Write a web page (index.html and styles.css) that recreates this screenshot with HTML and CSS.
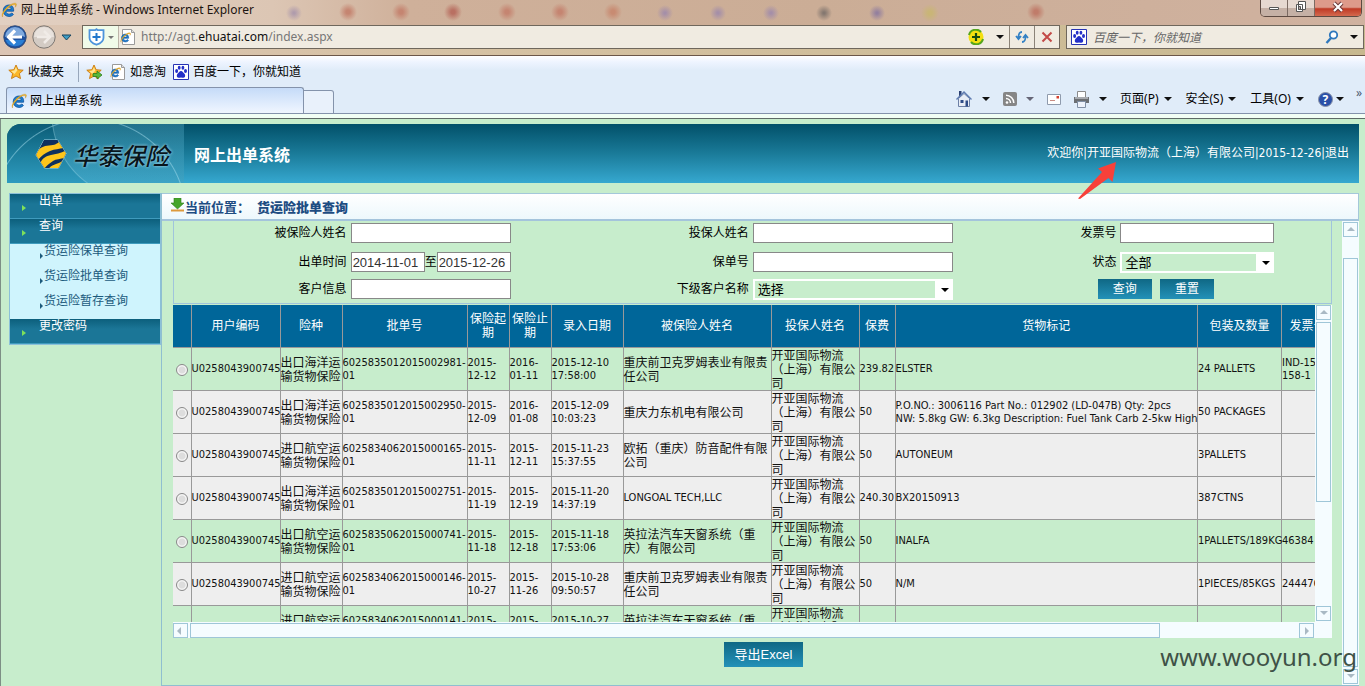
FILE: index.html
```html
<!DOCTYPE html>
<html lang="zh-CN">

<head>
    <meta charset="UTF-8">
    <title>网上出单系统</title>
    <link rel="stylesheet" href="styles.css">
</head>

<body>
    <svg class="defs" width="0" height="0">
        <symbol id="ie" viewBox="0 0 16 16">
            <path d="M12.6 9.2H4.9c.1 2 1.5 3 3.3 3 1.200 0 2.100-.4 2.700-1.200l1.500 1.400c-1 1.400-2.500 2-4.400 2-3.400 0-5.800-2.300-5.800-5.700 0-3.400 2.400-5.700 5.600-5.700 3.300 0 5.200 2.400 4.800 6.200zM5 7.300h5.200c-.2-1.500-1.100-2.300-2.500-2.300S5.200 5.800 5 7.300z" fill="#1c7fd0" stroke="#0c4f9c" stroke-width=".8" />
            <path d="M1.600 15C-.4 13 3.200 6.500 8.500 3.200 11.600 1.200 14.500.6 15.200 1.700c.5.800 0 2.200-.8 3.500.3-1.500.2-2.400-.6-2.600-1.600-.3-4.500 1.200-7.300 3.800C3.200 9.600 1 13.200 1.600 15z" fill="#f0b428" stroke="#b97d10" stroke-width=".3" />
        </symbol>
        <symbol id="page-icon" viewBox="0 0 16 16">
            <path d="M2.500.5h9l3 3v12h-12z" fill="#fff" stroke="#9a9a9a" />
            <path d="M11.500.5v3h3" fill="#ddd" stroke="#9a9a9a" />
            <svg x="0" y="3" width="11" height="11" viewBox="0 0 16 16"><use href="#ie" /></svg>
        </symbol>
        <symbol id="paw" viewBox="0 0 16 16">
            <path d="M.5.500h15v15H.500z" fill="#fff" stroke="#2632b4" />
            <ellipse cx="3.600" cy="7" rx="1.500" ry="2" />
            <ellipse cx="6.200" cy="3.800" rx="1.400" ry="2" />
            <ellipse cx="9.900" cy="3.800" rx="1.400" ry="2" />
            <ellipse cx="12.500" cy="7" rx="1.500" ry="2" />
            <path d="M8 7c1.600 0 2.100 1.500 3.200 2.600 1.500 1.500 1.300 4-.7 4.200-1 .1-1.600-.3-2.500-.3s-1.500.4-2.500.3c-2-.2-2.200-2.700-.7-4.200C5.900 8.500 6.400 7 8 7z" />
        </symbol>
        <symbol id="star" viewBox="0 0 16 16">
            <path d="M8 1l2.100 4.700 5.100.5-3.800 3.400 1.100 5L8 12l-4.500 2.600 1.100-5L.8 6.200l5.100-.5z" fill="#fbb829" stroke="#c8780c" stroke-width=".9" />
            <path d="M8 3l1.300 3.400-2.800 3.600-3.400-3 3.200-.4z" fill="#ffe591" />
        </symbol>
    </svg>

    <header id="browser">
        <div class="title-bar">
            <svg class="icon"><use href="#ie" /></svg>
            <span class="title">网上出单系统 - Windows Internet Explorer</span>
            <div class="win-btns">
                <button class="min" aria-label="最小化"><svg width="12" height="14" viewBox="0 0 12 14"><path d="M1.500 7.500h9v2h-9z" fill="#fff" stroke="#555" /></svg></button>
                <button class="max" aria-label="还原"><svg width="12" height="14" viewBox="0 0 12 14"><path d="M3.500 1.500h7v8h-7zM1.500 4.500h6v7h-6z" fill="#fff" stroke="#555" /><path d="M3.500 6.500h2v3h-2z" fill="#baa" stroke="#555" /></svg></button>
                <button class="close" aria-label="关闭"><svg width="12" height="14" viewBox="0 0 12 14"><path d="M2 3l8 8M10 3l-8 8" stroke="#633" stroke-width="4" /><path d="M2 3l8 8M10 3l-8 8" stroke="#fff" stroke-width="2.200" /></svg></button>
            </div>
        </div>
        <div class="address-bar">
            <button class="nav back" aria-label="后退"><svg width="24" height="24" viewBox="0 0 24 24"><circle cx="12" cy="12" r="11.200" fill="#1d4f9e" stroke="#36517c" /><path d="M2 12a10 10 0 0120 0c-5-2-15-2-20 0z" fill="#7fa9dd" /><path d="M2.500 15a10 9 0 0019 0z" fill="#2a7fd4" /><path d="M12 5.500L5.500 12l6.500 6.500M6.500 12H19" fill="none" stroke="#fff" stroke-width="3.200" /></svg></button>
            <button class="nav forward" aria-label="前进"><svg width="24" height="24" viewBox="0 0 24 24"><circle cx="12" cy="12" r="11.200" fill="#d3cbc4" stroke="#7d7772" /><path d="M2 12a10 10 0 0120 0z" fill="#e8e2dd" /><path d="M12 6l6 6-6 6M17.500 12H5" fill="none" stroke="#f0ebe7" stroke-width="2.500" /></svg></button>
            <button class="history" aria-label="历史"><svg width="11" height="7" viewBox="0 0 11 7"><path d="M1 1h9L5.500 6z" fill="#3e9cc4" stroke="#17455f" /></svg></button>
            <div class="url-box">
                <span class="shield">
                    <svg width="17" height="18" viewBox="0 0 17 18"><path d="M8.500 1.200l1.300 1h5.700v7.500c0 4-4 6-7 7-3-1-7-3-7-7V2.200h5.700z" fill="#fff" stroke="#4d94dc" stroke-width="1.800" /><path d="M8.500 5v8M4.500 9h8" stroke="#2277cc" stroke-width="2" /></svg>
                    <i class="caret small"></i>
                </span>
                <svg class="icon"><use href="#page-icon" /></svg>
                <span class="url">http://agt.<b>ehuatai.com</b>/index.aspx</span>
                <svg class="plus" width="16" height="16" viewBox="0 0 16 16"><circle cx="8" cy="8" r="7.500" fill="#f4e010" /><path d="M1 6a7 7 0 0112-3M15 10a7 7 0 01-12 3" fill="none" stroke="#56a51c" stroke-width="2" /><path d="M8 4v8M4 8h8" stroke="#174c12" stroke-width="2.200" /></svg>
                <i class="caret"></i>
                <button class="cell" aria-label="刷新"><svg width="14" height="14" viewBox="0 0 14 14"><path d="M7 2C4 2 3.500 4 3.500 8M1 6l2.500 3L6 6M7 12c3 0 3.500-2 3.500-6M8 8l2.500-3L13 8" fill="none" stroke="#3280c4" stroke-width="1.800" /></svg></button>
                <button class="cell" aria-label="停止"><svg width="12" height="12" viewBox="0 0 12 12"><path d="M1.500 1.500l9 9M10.500 1.500l-9 9" stroke="#c34a48" stroke-width="2" /></svg></button>
            </div>
            <div class="search-box">
                <svg class="icon paw"><use href="#paw" /></svg>
                <input type="text" aria-label="搜索" placeholder="百度一下，你就知道">
                <svg width="14" height="14" viewBox="0 0 14 14"><circle cx="8.500" cy="5" r="3.700" fill="#fff" stroke="#2f78bd" stroke-width="1.800" /><path d="M6 8l-4.500 5" stroke="#2f78bd" stroke-width="2.400" /></svg>
                <i class="caret"></i>
            </div>
        </div>
        <nav class="favorites">
            <a href="#"><svg class="icon"><use href="#star" /></svg>收藏夹</a>
            <a href="#" class="add" aria-label="添加到收藏夹栏"><svg width="17" height="16" viewBox="0 0 17 16"><use href="#star" width="16" height="16" /><path d="M7 9.500h4V7l5 4-5 4v-2.500H7z" fill="#58b83a" stroke="#2c7c1b" stroke-width=".8" /></svg></a>
            <a href="#"><svg class="icon"><use href="#page-icon" /></svg>如意淘</a>
            <a href="#"><svg class="icon paw"><use href="#paw" /></svg>百度一下，你就知道</a>
        </nav>
        <div class="tab-bar">
            <a href="#" class="tab"><svg class="icon"><use href="#ie" /></svg>网上出单系统</a>
            <button class="new-tab" aria-label="新选项卡"></button>
            <div class="tools">
                <button aria-label="主页"><svg width="18" height="18" viewBox="0 0 18 18"><path d="M4 1h2.500v5L4 8z" fill="#2b3f72" /><path d="M3.500 8.500L9 3.500l5.500 5v8h-11z" fill="#e8edf6" stroke="#6d80a6" /><path d="M1.500 9.500L9 2l7.500 7.500" fill="none" stroke="#5f7bb0" stroke-width="1.400" /><path d="M5.500 10h3v3h-3zM10.500 10.500H13v6h-2.500z" fill="#2f4d88" /></svg></button>
                <i class="caret"></i>
                <button class="rss" aria-label="源"><svg width="14" height="14" viewBox="0 0 14 14"><rect width="14" height="14" rx="2" fill="#868686" /><circle cx="4" cy="10.500" r="1.300" fill="#fff" /><path d="M3 6.500a4.500 4.500 0 014.500 4.500M3 3.200A7.800 7.800 0 0110.800 11" fill="none" stroke="#fff" stroke-width="1.500" /></svg></button>
                <i class="caret dim"></i>
                <button class="mail" aria-label="阅读邮件"><svg width="14" height="11" viewBox="0 0 14 11"><path d="M.500.500h13v10H.500z" fill="#fff" stroke="#8f9bad" /><path d="M9.500 2h2.500v2.500H9.500z" fill="#d5402f" /><path d="M3 6.500h5" stroke="#c98d84" /></svg></button>
                <button aria-label="打印"><svg width="17" height="17" viewBox="0 0 17 17"><path d="M4.500.500h8v6h-8z" fill="#fff" stroke="#8b8b8b" /><path d="M1 6h15v6H1z" fill="#6c6f73" /><path d="M2 6h13v2H2z" fill="#a8abb0" /><path d="M4.500 10.500h8v6h-8z" fill="#eef3fb" stroke="#8190a5" /></svg></button>
                <i class="caret"></i>
                <button class="menu">页面(P)<i class="caret"></i></button>
                <button class="menu">安全(S)<i class="caret"></i></button>
                <button class="menu">工具(O)<i class="caret"></i></button>
                <button class="help" aria-label="帮助"><span>?</span><i class="caret"></i></button>
                <span class="more">»</span>
            </div>
        </div>
    </header>

    <div id="page">
        <header class="banner">
            <div class="logo">
                <svg width="32" height="31" viewBox="0 0 32 31">
                    <defs><clipPath id="hex"><path d="M9 1h13.500L31 14.500 23.500 29H9.500L1 16z" /></clipPath></defs>
                    <path d="M9 1h13.500L31 14.500 23.500 29H9.500L1 16z" fill="none" stroke="#a9d6e8" />
                    <g clip-path="url(#hex)">
                        <path d="M0 0h32v31H0z" fill="#0d2f5e" />
                        <path d="M0 17C3 9 8 7 14 6.500S22 5 25 2l4 7c-5 1-9 1-14 3S6 17 3 21z" fill="#fdc51b" />
                        <path d="M5 25c2-6 6-8 11-9s10-2 16-5l-2 8c-5 1-9 1-12 3s-6 4-9 8z" fill="#fdc51b" />
                        <path d="M13 31c2-4 5-5 8-6s5-2 8-4l-3 10z" fill="#fdc51b" />
                    </g>
                </svg>
                <span>华泰保险</span>
            </div>
            <h1>网上出单系统</h1>
            <p class="user">欢迎你|开亚国际物流（上海）有限公司|2015-12-26|<a href="#">退出</a></p>
        </header>

        <div id="wrap">
            <aside>
                <ul id="menu">
                    <li><a href="#">出单</a></li>
                    <li>
                        <a href="#">查询</a>
                        <ul class="sub">
                            <li><a href="#">货运险保单查询</a></li>
                            <li><a href="#">货运险批单查询</a></li>
                            <li><a href="#">货运险暂存查询</a></li>
                        </ul>
                    </li>
                    <li><a href="#">更改密码</a></li>
                </ul>
            </aside>

            <main>
                <div class="crumb">
                    <svg width="15" height="14" viewBox="0 0 15 14"><path d="M4 0h7v5h3l-6.500 6L1 5h3z" fill="#45a52a" stroke="#2f7c1b" stroke-width=".6" /><path d="M1 11.500h13v2H1z" fill="#dd9a3c" /></svg>
                    <span>当前位置：</span>
                    <b>货运险批单查询</b>
                </div>
                <div class="frame">
                    <section class="content">
                        <form id="query">
                            <label for="insured">被保险人姓名</label>
                            <div><input type="text" id="insured" class="w160"></div>
                            <label for="holder">投保人姓名</label>
                            <div><input type="text" id="holder" class="w200"></div>
                            <label for="invoice">发票号</label>
                            <div><input type="text" id="invoice" class="w154"></div>

                            <label for="from">出单时间</label>
                            <div><input type="text" id="from" class="date" value="2014-11-01">至<input type="text" class="date" aria-label="截止时间" value="2015-12-26"></div>
                            <label for="policy">保单号</label>
                            <div><input type="text" id="policy" class="w200"></div>
                            <label for="state">状态</label>
                            <div><span class="select w154"><select id="state"><option>全部</option></select></span></div>

                            <label for="customer">客户信息</label>
                            <div><input type="text" id="customer" class="w160"></div>
                            <label for="sub">下级客户名称</label>
                            <div><span class="select w200"><select id="sub"><option>选择</option></select></span></div>
                            <div class="btns">
                                <button type="button" class="btn">查询</button>
                                <button type="reset" class="btn">重置</button>
                            </div>
                        </form>

                        <div class="grid">
                            <div class="view">
                                <table>
                                    <colgroup>
                                        <col class="c-radio"><col class="c-user"><col class="c-kind"><col class="c-no"><col class="c-day"><col class="c-day"><col class="c-time"><col class="c-insured"><col class="c-holder"><col class="c-fee"><col><col class="c-pack"><col class="c-invoice"><col class="c-state">
                                    </colgroup>
                                    <thead>
                                        <tr>
                                            <th></th><th>用户编码</th><th>险种</th><th>批单号</th><th>保险起期</th><th>保险止期</th><th>录入日期</th><th>被保险人姓名</th><th>投保人姓名</th><th>保费</th><th>货物标记</th><th>包装及数量</th><th>发票号</th><th></th>
                                        </tr>
                                    </thead>
                                    <tbody>
                                        <tr class="on">
                                            <td><input type="radio" name="row" aria-label="第1行"></td>
                                            <td>U0258043900745</td>
                                            <td class="cn">出口海洋运输货物保险</td>
                                            <td>6025835012015002981-01</td>
                                            <td>2015-12-12</td>
                                            <td>2016-01-11</td>
                                            <td>2015-12-10 17:58:00</td>
                                            <td class="cn">重庆前卫克罗姆表业有限责任公司</td>
                                            <td class="cn">开亚国际物流（上海）有限公司</td>
                                            <td>239.82</td>
                                            <td>ELSTER</td>
                                            <td>24 PALLETS</td>
                                            <td>IND-15-158-1</td>
                                            <td></td>
                                        </tr>
                                        <tr>
                                            <td><input type="radio" name="row" aria-label="第2行"></td>
                                            <td>U0258043900745</td>
                                            <td class="cn">出口海洋运输货物保险</td>
                                            <td>6025835012015002950-01</td>
                                            <td>2015-12-09</td>
                                            <td>2016-01-08</td>
                                            <td>2015-12-09 10:03:23</td>
                                            <td class="cn">重庆力东机电有限公司</td>
                                            <td class="cn">开亚国际物流（上海）有限公司</td>
                                            <td>50</td>
                                            <td class="goods">P.O.NO.: 3006116 Part No.: 012902 (LD-047B) Qty: 2pcs<br>NW: 5.8kg GW: 6.3kg Description: Fuel Tank Carb 2-5kw High</td>
                                            <td>50 PACKAGES</td>
                                            <td></td>
                                            <td></td>
                                        </tr>
                                        <tr>
                                            <td><input type="radio" name="row" aria-label="第3行"></td>
                                            <td>U0258043900745</td>
                                            <td class="cn">进口航空运输货物保险</td>
                                            <td>6025834062015000165-01</td>
                                            <td>2015-11-11</td>
                                            <td>2015-12-11</td>
                                            <td>2015-11-23 15:37:55</td>
                                            <td class="cn">欧拓（重庆）防音配件有限公司</td>
                                            <td class="cn">开亚国际物流（上海）有限公司</td>
                                            <td>50</td>
                                            <td>AUTONEUM</td>
                                            <td>3PALLETS</td>
                                            <td></td>
                                            <td></td>
                                        </tr>
                                        <tr>
                                            <td><input type="radio" name="row" aria-label="第4行"></td>
                                            <td>U0258043900745</td>
                                            <td class="cn">出口海洋运输货物保险</td>
                                            <td>6025835012015002751-01</td>
                                            <td>2015-11-19</td>
                                            <td>2015-12-19</td>
                                            <td>2015-11-20 14:37:19</td>
                                            <td>LONGOAL TECH,LLC</td>
                                            <td class="cn">开亚国际物流（上海）有限公司</td>
                                            <td>240.30</td>
                                            <td>BX20150913</td>
                                            <td>387CTNS</td>
                                            <td></td>
                                            <td></td>
                                        </tr>
                                        <tr class="on">
                                            <td><input type="radio" name="row" aria-label="第5行"></td>
                                            <td>U0258043900745</td>
                                            <td class="cn">出口航空运输货物保险</td>
                                            <td>6025835062015000741-01</td>
                                            <td>2015-11-18</td>
                                            <td>2015-12-18</td>
                                            <td>2015-11-18 17:53:06</td>
                                            <td class="cn">英拉法汽车天窗系统（重庆）有限公司</td>
                                            <td class="cn">开亚国际物流（上海）有限公司</td>
                                            <td>50</td>
                                            <td>INALFA</td>
                                            <td>1PALLETS/189KG</td>
                                            <td>46384</td>
                                            <td></td>
                                        </tr>
                                        <tr>
                                            <td><input type="radio" name="row" aria-label="第6行"></td>
                                            <td>U0258043900745</td>
                                            <td class="cn">进口航空运输货物保险</td>
                                            <td>6025834062015000146-01</td>
                                            <td>2015-10-27</td>
                                            <td>2015-11-26</td>
                                            <td>2015-10-28 09:50:57</td>
                                            <td class="cn">重庆前卫克罗姆表业有限责任公司</td>
                                            <td class="cn">开亚国际物流（上海）有限公司</td>
                                            <td>50</td>
                                            <td>N/M</td>
                                            <td>1PIECES/85KGS</td>
                                            <td>244476</td>
                                            <td></td>
                                        </tr>
                                        <tr class="on">
                                            <td></td>
                                            <td></td>
                                            <td class="cn">进口航空运输货物保险</td>
                                            <td>6025834062015000141-01</td>
                                            <td>2015-10-27</td>
                                            <td>2015-11-26</td>
                                            <td>2015-10-27 09:50:57</td>
                                            <td class="cn">英拉法汽车天窗系统（重庆）有限公司</td>
                                            <td class="cn">开亚国际物流（上海）有限公司</td>
                                            <td></td>
                                            <td></td>
                                            <td></td>
                                            <td></td>
                                            <td></td>
                                        </tr>
                                    </tbody>
                                </table>
                            </div>
                            <div class="scroll-y"><i class="up"></i><i class="thumb"></i><i class="down"></i></div>
                            <div class="scroll-x"><i class="left"></i><i class="thumb"></i><i class="right"></i></div>
                            <div class="corner"></div>
                        </div>

                        <div class="export"><button type="button" class="btn">导出Excel</button></div>
                    </section>
                    <div class="scroll-y outer"><i class="up"></i><i class="thumb"></i><i class="down"></i></div>
                </div>
            </main>
        </div>
    </div>

    <svg class="pointer" width="42" height="40" viewBox="0 0 42 40"><path d="M40 2L22 8.500l4 3.500L2 38.500l2 .5L32.500 18l4 4z" fill="#f8413a" /></svg>
    <div class="watermark">www.wooyun.org</div>
</body>

</html>
```

FILE: styles.css
```css
* {
    box-sizing: border-box;
}

body {
    display: flex;
    flex-direction: column;
    position: relative;
    height: 100vh;
    margin: 0;
    overflow: hidden;
    background: #c7edcc;
    font-size: 12px;
    line-height: 14px;
    font-family: "Liberation Sans", "Noto Sans CJK SC", sans-serif;
}

ul {
    padding: 0;
    margin: 0;
    list-style: none;
}

a {
    color: inherit;
    text-decoration: none;
}

button {
    padding: 0;
    border: 0;
    background: none;
    color: inherit;
    font: inherit;
}

svg {
    display: block;
    flex: none;
}

.defs {
    position: absolute;
}

.icon {
    width: 16px;
    height: 16px;
}

.paw {
    fill: #2430c8;
}

.caret {
    flex: none;
    width: 0;
    border: 4px solid transparent;
    border-top-color: #111;
    border-bottom: 0;
}

.caret.small {
    border-width: 3px;
    border-bottom: 0;
    border-top-color: #777;
}

.caret.dim {
    border-top-color: #667;
}

/* 浏览器外框 */
#browser {
    flex: none;
    font-family: "Noto Sans", "Noto Sans CJK SC", sans-serif;
}

.title-bar {
    display: flex;
    align-items: center;
    height: 25px;
    padding-left: 1px;
    padding-bottom: 5px;
    background:
        radial-gradient(circle at 453px 12px, #b97062 2px, transparent 9px),
        radial-gradient(circle at 507px 12px, #c58571 2px, transparent 9px),
        radial-gradient(circle at 560px 12px, #c58571 2px, transparent 9px),
        radial-gradient(circle at 613px 12px, #c88b72 2px, transparent 9px),
        radial-gradient(circle at 348px 12px, #c58571 2px, transparent 9px),
        radial-gradient(circle at 401px 12px, #c58571 2px, transparent 9px),
        radial-gradient(circle at 294px 13px, #b09cac 1px, transparent 8px),
        radial-gradient(circle at 665px 13px, #a58fa8 1px, transparent 8px),
        radial-gradient(circle at 718px 13px, #a58fa8 1px, transparent 8px),
        radial-gradient(circle at 771px 13px, #a58fa8 1px, transparent 8px),
        radial-gradient(circle at 824px 13px, #857870 1px, transparent 8px),
        radial-gradient(circle at 877px 13px, #94809e 1px, transparent 8px),
        radial-gradient(circle at 930px 13px, #c9b577 2px, transparent 9px),
        radial-gradient(circle at 1036px 12px, #c07c6a 2px, transparent 9px),
        linear-gradient(90deg, #e2d0c2, #dcc6b4 20%, #cfb09a 30%, #cbad96 60%, #d0b2a0);
}

.title {
    flex: 1;
    margin-left: 4px;
    color: #1c1410;
}

.win-btns {
    display: flex;
    align-self: flex-start;
    height: 17px;
    margin-right: 3px;
    border: 1px solid #5d4a42;
    border-top: 0;
    border-radius: 0 0 5px 5px;
    overflow: hidden;
}

.win-btns button {
    display: flex;
    justify-content: center;
    width: 27px;
    border-right: 1px solid #7b6a62;
    background: linear-gradient(#e6d8d0 50%, #c5b0a5 50%);
}

.win-btns .close {
    width: 46px;
    border: 0;
    background: linear-gradient(#dd9a8a 45%, #bf3a25 55%, #d4694f);
}

.address-bar {
    display: flex;
    align-items: center;
    height: 31px;
    padding: 0 1px 6px 3px;
    border-bottom: 1px solid #6b5648;
    background: linear-gradient(90deg, #dcc5b4, #d6c2a4 30%, #c8b98f);
}

.nav {
    margin-right: 5px;
}

.history {
    margin-right: 10px;
}

.url-box,
.search-box {
    display: flex;
    align-items: center;
    height: 24px;
    border: 1px solid #6f675c;
    background: #f0ebe1;
}

.url-box {
    flex: 1;
}

.shield {
    display: flex;
    align-items: center;
    gap: 3px;
    height: 22px;
    margin-right: 1px;
    padding: 0 4px 0 5px;
    background: #f0fbe9;
    border-right: 1px solid #bcb5a9;
}

.url {
    flex: 1;
    margin-left: 5px;
    color: #777;
}

.url b {
    color: #111;
    font-weight: normal;
}

.plus {
    margin-right: 12px;
}

.url-box .cell {
    display: flex;
    align-items: center;
    justify-content: center;
    width: 25px;
    height: 22px;
    border-left: 1px solid #8b8378;
}

.url-box .caret {
    margin-right: 5px;
}

.url-box .caret.small {
    margin: 0;
}

.search-box {
    width: 298px;
    margin-left: 6px;
    padding: 0 5px 0 4px;
    gap: 6px;
}

.search-box input {
    flex: 1;
    min-width: 0;
    height: 16px;
    padding: 0;
    border: 0;
    background: none;
    font: italic 12px/16px "Noto Sans CJK SC", sans-serif;
}

.search-box input::placeholder {
    color: #666;
}

.search-box .caret {
    margin-left: 5px;
}

.favorites {
    display: flex;
    align-items: center;
    height: 31px;
    padding-left: 8px;
    background: linear-gradient(#fff, #eef4ff 6px, #e0ecf9 14px);
}

.favorites a {
    display: flex;
    align-items: center;
    gap: 4px;
    margin-right: 7px;
}

.favorites a:first-child {
    margin-right: 14px;
}

.favorites .add {
    height: 20px;
    padding-left: 7px;
    border-left: 1px solid #98a7bb;
}

.tab-bar {
    display: flex;
    align-items: flex-end;
    height: 32px;
    padding-left: 6px;
    border-bottom: 1px solid #5e6a66;
    background: linear-gradient(#e0ecf9 26px, #8493ab 26px, #8493ab 27px, #f2fff5 27px);
}

.tab {
    display: flex;
    align-items: center;
    gap: 3px;
    width: 298px;
    height: 26px;
    margin-bottom: 5px;
    padding-left: 4px;
    border: 1px solid #8493ab;
    border-bottom: 0;
    border-radius: 3px 3px 0 0;
    background: linear-gradient(#c5dbf8, #f0f6ff);
}

.new-tab {
    width: 30px;
    height: 24px;
    margin-bottom: 4px;
    border: 1px solid #8493ab;
    border-left: 0;
    border-radius: 0 3px 0 0;
    background: #e9f1fb;
}

.tools {
    display: flex;
    flex: 1;
    align-items: center;
    justify-content: flex-end;
    height: 26px;
    margin-bottom: 6px;
    padding-right: 3px;
}

.tools > .caret {
    margin: 0 13px 0 9px;
}

.tools .mail {
    margin-right: 12px;
}

.tools .menu {
    display: flex;
    align-items: center;
    gap: 4px;
    margin-right: 14px;
}

.tools .menu .caret,
.help .caret {
    margin-left: 1px;
}

.help {
    display: flex;
    align-items: center;
    gap: 2px;
}

.help span {
    width: 15px;
    height: 15px;
    border: 1px solid #8a93a8;
    border-radius: 50%;
    background: #2a50a8;
    color: #fff;
    font-weight: bold;
    line-height: 13px;
}

.more {
    align-self: flex-start;
    margin-left: 12px;
    color: #4d5a70;
}

/* 页面 */
#page {
    display: flex;
    flex: 1;
    flex-direction: column;
    min-height: 0;
    padding: 5px 6px 0;
    border-left: 1px solid #7d8f85;
}

.banner {
    display: flex;
    flex: none;
    align-items: center;
    height: 59px;
    border-radius: 14px 0 0 0;
    background: linear-gradient(#025069, #1a7b99 50%, #36a8d0);
    color: #fff;
    overflow: hidden;
}

.logo {
    display: flex;
    align-items: center;
    gap: 6px;
    width: 177px;
    height: 60px;
    padding: 2px 0 0 28px;
    background:
        radial-gradient(circle at 82px 92px, transparent 96px, rgba(170, 225, 240, .5) 97px, transparent 98px),
        radial-gradient(circle at 130px -10px, rgba(120, 200, 225, .2) 84px, rgba(170, 225, 240, .4) 85px, transparent 86px),
        linear-gradient(#0b5c76, #1d7f9e 50%, #2f9cc0);
}

.logo span {
    color: #08151c;
    font: italic 500 24px/30px "Noto Sans CJK SC", sans-serif;
    text-shadow: 0 0 3px #bfe6f2;
    white-space: nowrap;
}

.banner h1 {
    flex: 1;
    margin: 4px 0 0 10px;
    font-size: 16px;
    line-height: 20px;
}

.user {
    margin: 0 10px 2px 0;
    font-family: "DejaVu Sans Condensed", "Noto Sans CJK SC", sans-serif;
}

#wrap {
    display: flex;
    flex: 1;
    min-height: 0;
    padding-top: 10px;
}

aside {
    flex: none;
    width: 155px;
    padding-left: 2px;
    border-right: 1px solid #8fbfd0;
}

#menu {
    width: 152px;
    border: 1px solid #8cc0d8;
    color: #fff;
}

#menu a {
    display: block;
    position: relative;
    height: 25px;
    padding-left: 29px;
    border-bottom: 1px solid #3f9bbd;
    background: linear-gradient(#0c5f7c, #1b7697 10px);
}

#menu a::before {
    content: "";
    position: absolute;
    left: 12px;
    bottom: 7px;
    border: 3px solid transparent;
    border-left: 4px solid #7fe05a;
    border-right: 0;
}

#menu .sub a {
    padding-left: 34px;
    border: 0;
    background: #cff4fd;
    color: #1b5a7c;
}

#menu .sub a::before {
    left: 30px;
    bottom: 10px;
    border-left: 3px solid #1b5a7c;
}

main {
    display: flex;
    flex: 1;
    flex-direction: column;
    min-width: 0;
}

.crumb {
    display: flex;
    flex: none;
    align-items: center;
    height: 28px;
    padding-left: 8px;
    border: 1px solid #a4c8da;
    border-left: 0;
    border-bottom: 2px solid #a4c4dc;
    background: linear-gradient(#fff, #edf8fc);
    color: #1d4c82;
    font-size: 13px;
    font-weight: bold;
    line-height: 18px;
}

.crumb span {
    padding-top: 2px;
}

.crumb svg {
    align-self: flex-start;
    margin-top: 4px;
}

.crumb b {
    margin-left: 7px;
    padding-top: 2px;
}

.frame {
    display: flex;
    flex: 1;
    min-height: 0;
    border-bottom: 1px solid #8fbfd0;
}

.content {
    display: flex;
    flex: 1;
    flex-direction: column;
    min-width: 0;
    padding: 0 10px 0 11px;
}

#query {
    display: grid;
    flex: none;
    grid-template-columns: 177fr 225fr 178fr 200fr 168fr 211fr;
    grid-template-rows: 24px 34px 20px;
    align-items: center;
    padding-bottom: 4px;
    border: 1px solid #a0c4dc;
    border-top: 0;
}

#query label {
    padding-right: 4px;
    text-align: right;
}

#query > div {
    display: flex;
    align-items: center;
}

#query input {
    height: 20px;
    padding: 0 1px;
    border: 1px solid #888;
    background: #fff;
    color: #333;
    font: 13px "Liberation Sans", sans-serif;
}

.w160 {
    width: 160px;
}

.w200 {
    width: 200px;
}

.w154 {
    width: 154px;
}

#query .date {
    width: 74px;
}

.select {
    position: relative;
}

.select::after {
    content: "";
    position: absolute;
    top: 9px;
    right: 4px;
    border: 4px solid transparent;
    border-top-color: #000;
    border-bottom: 0;
    pointer-events: none;
}

.select select {
    width: 100%;
    height: 21px;
    padding: 0 3px;
    border: 2px solid #fff;
    border-radius: 0;
    outline: 0;
    background: linear-gradient(#c7edcc, #c7edcc) 0 0 / calc(100% - 16px) 100% no-repeat #fff;
    font: 13px/16px "Noto Sans CJK SC", sans-serif;
    appearance: none;
}

#query .btns {
    grid-column: 5 / 7;
    justify-content: center;
    gap: 8px;
    padding-left: 28px;
}

.btn {
    height: 20px;
    padding: 0 15px;
    background: linear-gradient(#0f6885, #2391b8);
    color: #fff;
    font-size: 12px;
    line-height: 18px;
}

/* 数据表格 */
.grid {
    display: grid;
    flex: 1;
    grid-template: minmax(0, 1fr) 16px / minmax(0, 1fr) 17px;
    min-height: 0;
    margin-top: 1px;
}

.view {
    overflow: hidden;
}

table {
    width: calc(100% + 160px);
    border-collapse: collapse;
    table-layout: fixed;
    background: #eee;
}

.c-radio {
    width: 18px;
}

.c-user {
    width: 89px;
}

.c-kind {
    width: 62px;
}

.c-no {
    width: 125px;
}

.c-day {
    width: 42px;
}

.c-time {
    width: 72px;
}

.c-insured {
    width: 148px;
}

.c-holder {
    width: 88px;
}

.c-fee {
    width: 36px;
}

.c-pack {
    width: 84px;
}

.c-invoice {
    width: 52px;
}

.c-state {
    width: 141px;
}

th,
td {
    height: 43px;
    padding: 0;
    border: 1px solid #999;
}

th:first-child,
td:first-child {
    border-left: 0;
    text-align: center;
}

th {
    height: 42px;
    border-top: 0;
    background: #006699;
    color: #fff;
    font-weight: normal;
}

td {
    font-family: "DejaVu Sans Condensed", sans-serif;
    font-size: 11px;
    line-height: 13px;
    color: #111;
}

td.cn {
    font-family: "Noto Sans CJK SC", sans-serif;
    font-size: 12px;
    line-height: 14px;
}

td.goods {
    white-space: nowrap;
}

tr.on td {
    background: #c7edcc;
}

td input {
    display: block;
    width: 12px;
    height: 12px;
    margin: 2px auto 0;
    border: 1px solid #888;
    border-radius: 50%;
    background: radial-gradient(#ddd 3px, #f4f4f4 4px);
    appearance: none;
}

/* 滚动条 */
.scroll-y,
.scroll-x,
.corner {
    display: flex;
    background: #f5fcff;
}

.scroll-y {
    flex-direction: column;
    justify-content: space-between;
    width: 17px;
    padding: 0 1px 1px;
}

.scroll-x {
    justify-content: space-between;
    padding: 1px 1px 0 0;
}

.scroll-y i,
.scroll-x i {
    position: relative;
    flex: none;
    width: 15px;
    height: 15px;
    border: 1px solid #9fc6d8;
    background: #f5fcff;
}

.scroll-y .thumb {
    height: 57%;
    margin: 2px 0 auto;
}

.scroll-x .thumb {
    width: 85%;
    margin: 0 auto 0 2px;
}

.scroll-y.outer {
    flex: none;
    padding-top: 1px;
}

.outer .thumb {
    flex: 1;
    margin: 21px 0 2px;
}

.up::after,
.down::after,
.left::after,
.right::after {
    content: "";
    position: absolute;
    top: 4px;
    left: 3px;
    border: 4px solid transparent;
}

.up::after {
    border-bottom-color: #a9b9c4;
    border-top: 0;
}

.down::after {
    border-top-color: #a9b9c4;
    border-bottom: 0;
}

.left::after {
    top: 3px;
    border-right-color: #a9b9c4;
    border-left: 0;
}

.right::after {
    top: 3px;
    left: 5px;
    border-left-color: #a9b9c4;
    border-right: 0;
}

.export {
    flex: none;
    height: 47px;
    padding: 4px 0 0 22px;
    text-align: center;
}

.export .btn {
    height: 25px;
    padding: 0 11px;
    font-size: 13px;
}

.pointer {
    position: absolute;
    top: 160px;
    right: 247px;
}

.watermark {
    position: absolute;
    right: 8px;
    bottom: 14px;
    color: #3f5247;
    font: 24px/30px "Noto Sans", sans-serif;
}
```
